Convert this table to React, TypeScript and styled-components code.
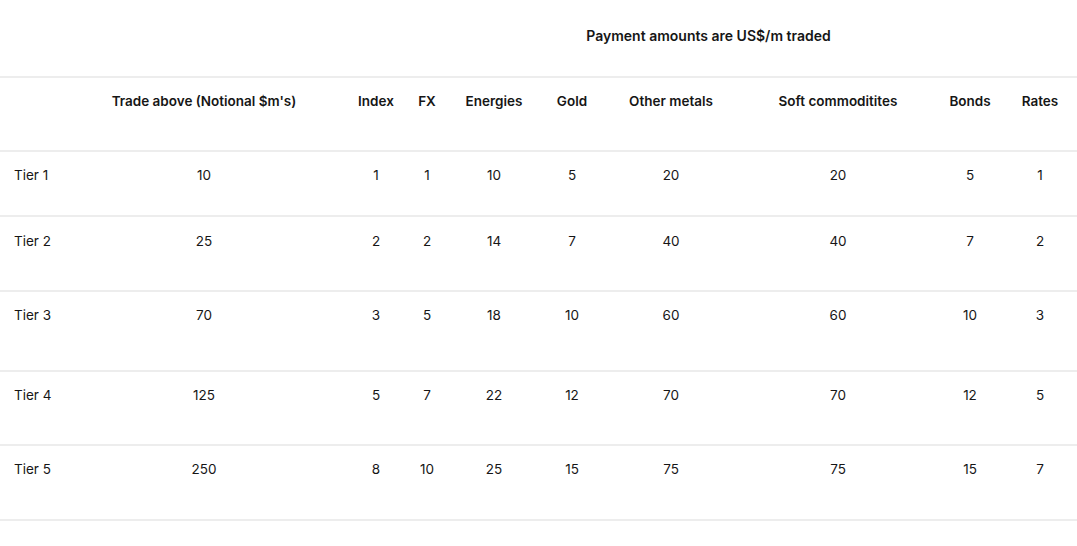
import React from "react";
import styled, { createGlobalStyle } from "styled-components";

const Global = createGlobalStyle`
  html, body { margin: 0; padding: 0; background: #ffffff; }
  body { font-family: Inter, "Noto Sans", Arial, sans-serif; color: #161616; }
`;

const COLS = "63px 282px 62px 40px 94px 62px 136px 198px 66px 74px";

const Table = styled.div`
  width: 1077px;
  display: flex;
  flex-direction: column;
`;

const Row = styled.div<{ $h: number; $pt: number }>`
  display: grid;
  grid-template-columns: ${COLS};
  align-items: start;
  box-sizing: border-box;
  height: ${(p) => p.$h}px;
  padding-top: ${(p) => p.$pt}px;
  border-bottom: 2px solid #ededed;
`;

const Cell = styled.div<{ $head?: boolean; $left?: boolean }>`
  font-size: 13.5px;
  line-height: 16px;
  font-weight: ${(p) => (p.$head ? 600 : 400)};
  text-align: ${(p) => (p.$left ? "left" : "center")};
  padding-left: ${(p) => (p.$left ? "14px" : "0")};
  white-space: nowrap;
`;

const Title = styled.div`
  grid-column: 3 / -1;
  padding-right: 5px;
  font-size: 14px;
  line-height: 16px;
  font-weight: 600;
  text-align: center;
  white-space: nowrap;
`;

const headers = [
  "",
  "Trade above (Notional $m's)",
  "Index",
  "FX",
  "Energies",
  "Gold",
  "Other metals",
  "Soft commoditites",
  "Bonds",
  "Rates",
];

const rows: { label: string; values: number[]; h: number; pt: number }[] = [
  { label: "Tier 1", values: [10, 1, 1, 10, 5, 20, 20, 5, 1], h: 65, pt: 15 },
  { label: "Tier 2", values: [25, 2, 2, 14, 7, 40, 40, 7, 2], h: 75, pt: 16 },
  { label: "Tier 3", values: [70, 3, 5, 18, 10, 60, 60, 10, 3], h: 80, pt: 15 },
  { label: "Tier 4", values: [125, 5, 7, 22, 12, 70, 70, 12, 5], h: 74, pt: 15 },
  { label: "Tier 5", values: [250, 8, 10, 25, 15, 75, 75, 15, 7], h: 75, pt: 15 },
];

export default function App() {
  return (
    <>
      <Global />
      <Table>
        <Row $h={78} $pt={28}>
          <Title>Payment amounts are US$/m traded</Title>
        </Row>
        <Row $h={74} $pt={15}>
          {headers.map((h, i) => (
            <Cell key={i} $head>
              {h}
            </Cell>
          ))}
        </Row>
        {rows.map((r) => (
          <Row key={r.label} $h={r.h} $pt={r.pt}>
            <Cell $left>{r.label}</Cell>
            {r.values.map((v, i) => (
              <Cell key={i}>{v}</Cell>
            ))}
          </Row>
        ))}
      </Table>
    </>
  );
}
